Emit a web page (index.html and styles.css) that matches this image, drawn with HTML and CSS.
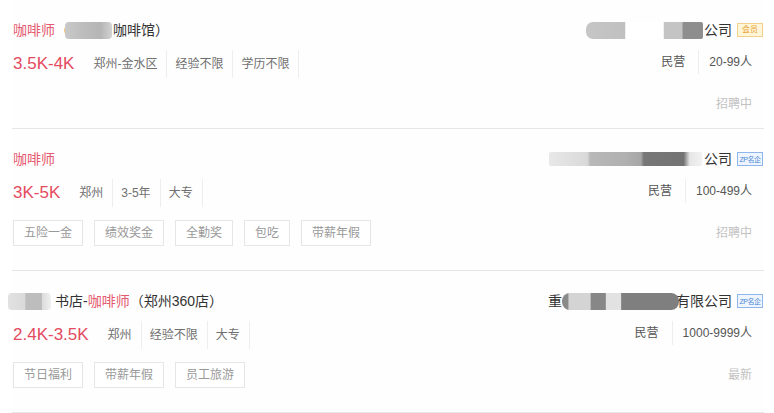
FILE: index.html
```html
<!DOCTYPE html>
<html lang="zh-CN">
<head>
<meta charset="utf-8">
<title>职位列表</title>
<link rel="stylesheet" href="styles.css">
</head>
<body>
<div class="list">
  <div class="job job--no-welfare">
    <div class="job-title"><span class="hl">咖啡师</span><span class="paren">（</span><span class="blur blur-t1"></span>咖啡馆）</div>
    <div class="company"><span class="blur blur-c1"></span>公司<span class="badge badge-vip">会员</span></div>
    <div class="job-info">
      <span class="salary">3.5K-4K</span>
      <span class="meta">郑州-金水区</span>
      <span class="meta">经验不限</span>
      <span class="meta">学历不限</span>
    </div>
    <div class="company-meta"><span class="cm">民营</span><span class="cm">20-99人</span></div>
    <div class="tags"></div>
    <div class="status">招聘中</div>
  </div>

  <div class="job">
    <div class="job-title"><span class="hl">咖啡师</span></div>
    <div class="company"><span class="blur blur-c2"></span>公司<span class="badge badge-zp">ZP名企</span></div>
    <div class="job-info">
      <span class="salary">3K-5K</span>
      <span class="meta">郑州</span>
      <span class="meta">3-5年</span>
      <span class="meta">大专</span>
    </div>
    <div class="company-meta"><span class="cm">民营</span><span class="cm">100-499人</span></div>
    <div class="tags">
      <span class="tag">五险一金</span>
      <span class="tag">绩效奖金</span>
      <span class="tag">全勤奖</span>
      <span class="tag">包吃</span>
      <span class="tag">带薪年假</span>
    </div>
    <div class="status">招聘中</div>
  </div>

  <div class="job">
    <div class="job-title"><span class="blur blur-t3"></span>书店-<span class="hl">咖啡师</span>（郑州360店）</div>
    <div class="company">重<span class="blur blur-c3"></span>有限公司<span class="badge badge-zp">ZP名企</span></div>
    <div class="job-info">
      <span class="salary">2.4K-3.5K</span>
      <span class="meta">郑州</span>
      <span class="meta">经验不限</span>
      <span class="meta">大专</span>
    </div>
    <div class="company-meta"><span class="cm">民营</span><span class="cm">1000-9999人</span></div>
    <div class="tags">
      <span class="tag">节日福利</span>
      <span class="tag">带薪年假</span>
      <span class="tag">员工旅游</span>
    </div>
    <div class="status">最新</div>
  </div>
</div>
</body>
</html>
```

FILE: styles.css
```css
* { box-sizing: border-box; }

html, body {
  margin: 0;
  padding: 0;
  background: #ffffff;
}

body {
  font-family: "Liberation Sans", "Noto Sans CJK SC", sans-serif;
  color: #333;
}

.list {
  padding: 0 10px 0 12px;
}

.job {
  display: grid;
  grid-template-columns: 1fr auto;
  grid-template-rows: 20px 28px 29px;
  row-gap: 10px;
  padding: 20px 1px 24px 1px;
  border-bottom: 1px solid #e6e6e6;
  background: #fefefe;
}

.job--no-welfare {
  padding-bottom: 11px;
}

.job-title {
  grid-column: 1;
  grid-row: 1;
  display: flex;
  align-items: center;
  font-size: 14px;
  line-height: 20px;
  color: #333;
  white-space: nowrap;
}

.hl {
  color: #e55a6e;
}

.paren {
  margin-right: -4px;
}

.company {
  grid-column: 2;
  grid-row: 1;
  display: flex;
  align-items: center;
  justify-content: flex-end;
  font-size: 14px;
  line-height: 20px;
  color: #333;
  white-space: nowrap;
}

.blur {
  display: inline-block;
  height: 17px;
  border-radius: 4px;
  filter: blur(0.7px);
}

.blur-t1 {
  width: 47px;
  margin-right: 1px;
  background: linear-gradient(90deg, #c9c9c9 0, #bdbdbd 40%, #b5b5b5 75%, #d2d2d2 100%);
}

.blur-t3 {
  width: 43px;
  margin-left: -5px;
  margin-right: 4px;
  background: linear-gradient(90deg, #e2e2e2 0, #dadada 40%, #bdbdbd 41%, #bdbdbd 78%, #dcdcdc 79%, #f0f0f0 100%);
}

.blur-c1 {
  width: 117px;
  margin-right: 1px;
  border-radius: 7px 2px 2px 7px;
  background: linear-gradient(90deg, #c6c6c6 0, #c0c0c0 33%, #ffffff 34%, #ffffff 66%, #c4c4c4 67%, #c4c4c4 82%, #8e8e8e 83%, #8e8e8e 100%);
}

.blur-c2 {
  width: 153px;
  height: 14px;
  margin-right: 2px;
  border-radius: 2px;
  background: linear-gradient(90deg, #e8e8e8 0, #d9d9d9 25%, #b8b8b8 27%, #b0b0b0 50%, #a6a6a6 60%, #777 62%, #737373 88%, #e6e6e6 92%, #f2f2f2 100%);
}

.blur-c3 {
  width: 117px;
  margin-right: -3px;
  border-radius: 8px;
  background: linear-gradient(90deg, #8a8a8a 0, #8a8a8a 5%, #d4d4d4 6%, #d4d4d4 24%, #878787 25%, #878787 37%, #e2e2e2 38%, #e2e2e2 50%, #7f7f7f 51%, #7f7f7f 100%);
}

.badge {
  display: inline-flex;
  align-items: center;
  justify-content: center;
  margin-left: 5px;
  width: 26px;
  height: 14px;
  font-size: 8px;
  line-height: 1;
  border: 1px solid;
  white-space: nowrap;
}

.badge-vip {
  background: #fff5d8;
  border-color: #f2d089;
  color: #e7a12f;
}

.badge-zp {
  background: #eef5fe;
  border-color: #8fb6ea;
  color: #4b86d4;
  font-size: 7px;
  letter-spacing: -0.5px;
}

.job-info {
  grid-column: 1;
  grid-row: 2;
  display: flex;
  align-items: center;
  white-space: nowrap;
}

.salary {
  font-size: 17px;
  color: #e44a60;
  margin-right: 11px;
  line-height: 28px;
}

.meta {
  font-size: 12px;
  color: #707070;
  line-height: 28px;
  padding: 0 9px 0 8px;
  border-right: 1px solid #eeeeee;
}

.company-meta {
  grid-column: 2;
  grid-row: 2;
  align-self: start;
  display: flex;
  justify-content: flex-end;
  margin-right: 11px;
  white-space: nowrap;
}

.cm {
  font-size: 12px;
  color: #555;
  line-height: 24px;
}

.cm:first-child {
  padding-right: 13px;
  border-right: 1px solid #eeeeee;
}

.cm + .cm {
  padding-left: 10px;
}

.tags {
  grid-column: 1;
  grid-row: 3;
  display: flex;
  gap: 11px;
  margin-top: 3px;
}

.tag {
  display: inline-block;
  height: 26px;
  line-height: 24px;
  padding: 0 10px;
  font-size: 12px;
  color: #999;
  border: 1px solid #e6e6e6;
  background: #fff;
  white-space: nowrap;
}

.status {
  grid-column: 2;
  grid-row: 3;
  margin-top: 3px;
  align-self: center;
  justify-self: end;
  margin-right: 11px;
  font-size: 12px;
  line-height: 16px;
  color: #c2c2c2;
}
```
